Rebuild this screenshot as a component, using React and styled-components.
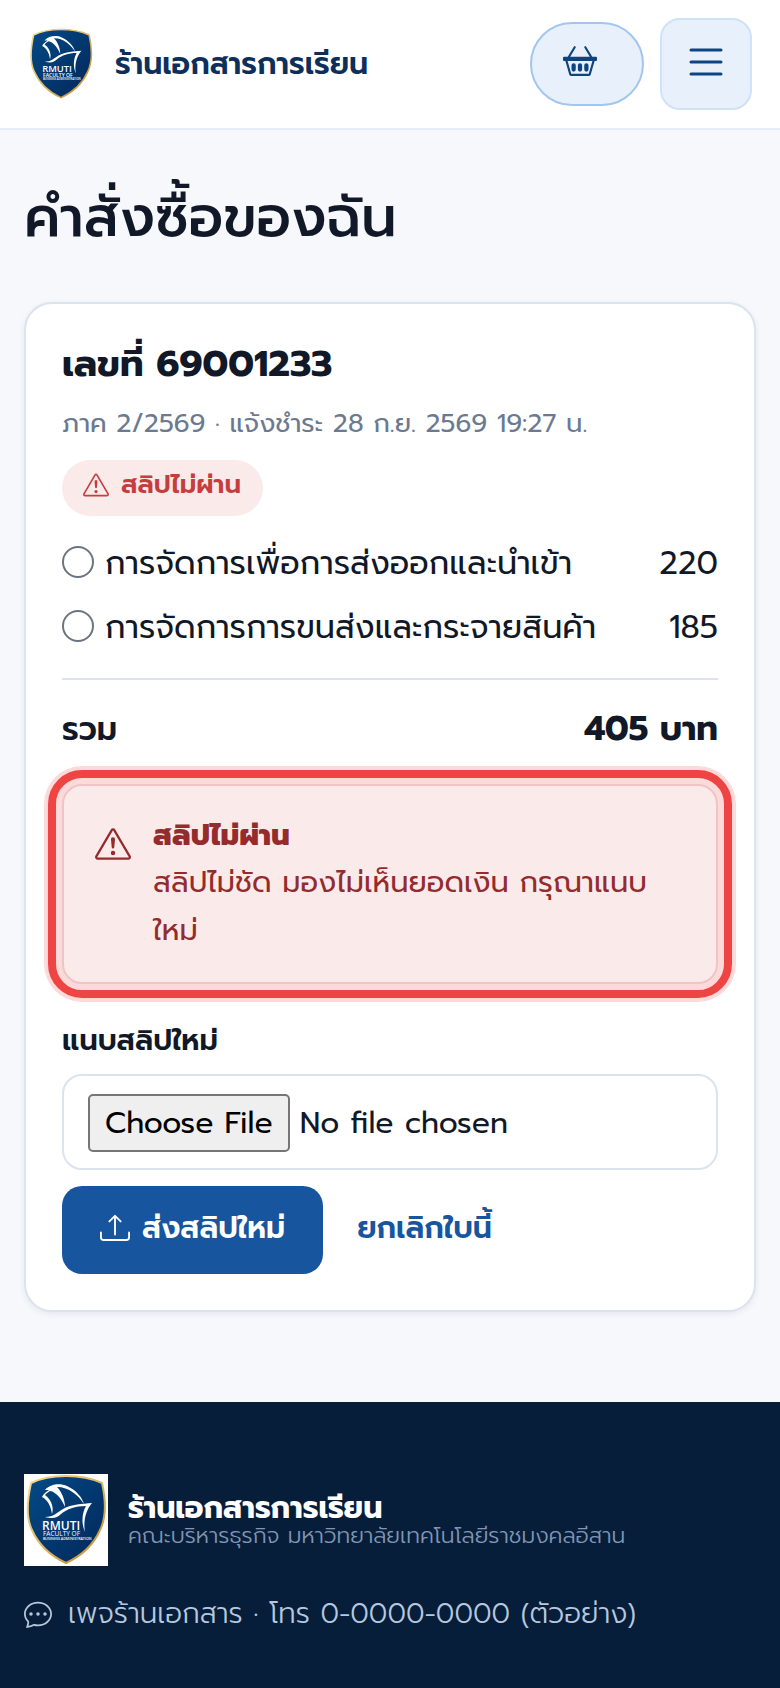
import React from "react";
import styled, { createGlobalStyle } from "styled-components";
import {
  BsBasket2,
  BsList,
  BsExclamationTriangle,
  BsCircle,
  BsUpload,
  BsChatDots,
} from "react-icons/bs";

const items = [
  { name: "การจัดการเพื่อการส่งออกและนำเข้า", price: 220 },
  { name: "การจัดการการขนส่งและกระจายสินค้า", price: 185 },
];

const Logo = ({ width, height }) => (
  <svg width={width} height={height} viewBox="0 0 84 92" role="img" aria-label="RMUTI">
    <defs>
      <linearGradient id="shield" x1="0" y1="0" x2="1" y2="1">
        <stop offset="0" stopColor="#034a86" />
        <stop offset="1" stopColor="#02275a" />
      </linearGradient>
      <linearGradient id="rim" x1="0" y1="0" x2="1" y2="1">
        <stop offset="0" stopColor="#f3dc8f" />
        <stop offset="0.5" stopColor="#dcb765" />
        <stop offset="1" stopColor="#c08a2c" />
      </linearGradient>
    </defs>
    <path fill="#fff" d="M0 0h84v92H0z" />
    <path
      d="M42 2C55 2 67 4 78 9C82 27 82 44 76 56C69 72 57 82 42 89C27 82 15 72 8 56C2 44 3 27 7 9C17 4 29 2 42 2Z"
      fill="url(#shield)"
      stroke="url(#rim)"
      strokeWidth="2"
    />
    <path
      d="M21 16C26 10 36 9 43 12C52 16 58 23 60 30C54 21 45 13 33 13C38 18 41 26 41 33C37 24 32 18 26 17C24 18 22 20 21 21C28 26 30 34 28 40C27 33 24 26 18 23C19 20 22 18 25 16Z"
      fill="#fff"
    />
    <path
      d="M21 43C30 43 32 39 39 35C48 30 58 30 68 29C62 36 59 47 61 58C57 49 58 39 62 32C51 32 43 35 37 40C33 44 29 45 21 43Z"
      fill="#fff"
    />
    <g fill="#fff" fontFamily="'Open Sans', sans-serif">
      <text x="18" y="56" fontSize="12" fontWeight="600">RMUTI</text>
      <text x="19" y="62" fontSize="6.5">FACULTY OF</text>
      <text x="19" y="66" fontSize="3.6" fontWeight="600">BUSINESS ADMINISTRATION</text>
    </g>
  </svg>
);

class App extends React.Component {
  render() {
    return (
      <Page>
        <GlobalStyle />
        <Header>
          <Brand href="#">
            <Logo width={66} height={72} />
            ร้านเอกสารการเรียน
          </Brand>
          <CartButton type="button" aria-label="ตะกร้า">
            <BsBasket2 size={34} />
          </CartButton>
          <MenuButton type="button" aria-label="เมนู">
            <BsList size={48} />
          </MenuButton>
        </Header>
        <Main>
          <Title>คำสั่งซื้อของฉัน</Title>
          <Card>
            <OrderHeading>เลขที่ 69001233</OrderHeading>
            <Meta>ภาค 2/2569 · แจ้งชำระ 28 ก.ย. 2569 19:27 น.</Meta>
            <Status>
              <BsExclamationTriangle size={26} />
              สลิปไม่ผ่าน
            </Status>
            <Items>
              {items.map(({ name, price }) => (
                <Item key={name}>
                  <BsCircle size={32} color="#6c757d" />
                  <span>{name}</span>
                  <Price>{price}</Price>
                </Item>
              ))}
            </Items>
            <Total>
              <span>รวม</span>
              <Amount>405 บาท</Amount>
            </Total>
            <Alert role="alert">
              <BsExclamationTriangle size={36} />
              <div>
                <strong>สลิปไม่ผ่าน</strong>
                <p>สลิปไม่ชัด มองไม่เห็นยอดเงิน กรุณาแนบใหม่</p>
              </div>
            </Alert>
            <Label htmlFor="slip">แนบสลิปใหม่</Label>
            <FileInput id="slip" type="file" />
            <Actions>
              <SubmitButton type="submit">
                <BsUpload size={30} />
                ส่งสลิปใหม่
              </SubmitButton>
              <CancelButton type="button">ยกเลิกใบนี้</CancelButton>
            </Actions>
          </Card>
        </Main>
        <Footer>
          <FooterBrand>
            <Logo width={84} height={92} />
            <div>
              <FooterName>ร้านเอกสารการเรียน</FooterName>
              <Faculty>คณะบริหารธุรกิจ มหาวิทยาลัยเทคโนโลยีราชมงคลอีสาน</Faculty>
            </div>
          </FooterBrand>
          <Contact>
            <BsChatDots size={28} />
            เพจร้านเอกสาร · โทร 0-0000-0000 (ตัวอย่าง)
          </Contact>
        </Footer>
      </Page>
    );
  }
}

const GlobalStyle = createGlobalStyle`
  * {
    box-sizing: border-box;
  }
  body {
    margin: 0;
    background: #f7f8fc;
    color: #111827;
    font-family: Prompt, Kanit, "Noto Sans Thai", "Noto Sans", sans-serif;
    font-size: 32px;
  }
  h1, h2, p, ul {
    margin: 0;
    padding: 0;
  }
  button, input {
    font-family: inherit;
  }
  svg {
    flex-shrink: 0;
  }
`;

const Page = styled.div`
  min-height: 100vh;
  display: flex;
  flex-direction: column;
`;

const Header = styled.header`
  display: flex;
  align-items: center;
  gap: 16px;
  padding: 18px 28px;
  background: #fff;
  border-bottom: 2px solid #e6edf5;
`;

const Brand = styled.a`
  display: flex;
  align-items: center;
  gap: 21px;
  margin-right: auto;
  color: #0d2f5c;
  font-size: 30px;
  font-weight: 600;
  line-height: 40px;
  white-space: nowrap;
  text-decoration: none;
`;

const CartButton = styled.button`
  width: 114px;
  height: 84px;
  padding: 0 31px 6px;
  display: flex;
  align-items: center;
  border: 2px solid #a3c6f0;
  border-radius: 42px;
  background: #e8f0fb;
  color: #0f4483;
`;

const MenuButton = styled.button`
  width: 92px;
  height: 92px;
  padding: 0 0 4px;
  display: flex;
  align-items: center;
  justify-content: center;
  border: 2px solid #cfe2f8;
  border-radius: 20px;
  background: #e8f0fb;
  color: #0f4483;
`;

const Main = styled.main`
  padding: 48px 24px 90px;
`;

const Title = styled.h1`
  margin-bottom: 44px;
  font-size: 56px;
  font-weight: 500;
  line-height: 80px;
`;

const Card = styled.section`
  padding: 32px 36px 36px;
  background: #fff;
  border: 2px solid #dbe3ec;
  border-radius: 28px;
  box-shadow: 0 2px 6px rgba(15, 40, 80, 0.08);
`;

const OrderHeading = styled.h2`
  font-size: 37px;
  font-weight: 700;
  line-height: 56px;
`;

const Meta = styled.p`
  margin-top: 10px;
  color: #6b7a90;
  font-size: 26px;
  line-height: 44px;
`;

const Status = styled.div`
  display: flex;
  align-items: center;
  gap: 12px;
  width: fit-content;
  height: 56px;
  margin-top: 14px;
  padding: 0 22px 6px 21px;
  border-radius: 28px;
  background: #faeaea;
  color: #c53d3d;
  font-size: 26px;
  font-weight: 600;
  line-height: 40px;
`;

const Items = styled.ul`
  margin-top: 14px;
  padding-bottom: 20px;
  list-style: none;
  border-bottom: 2px solid #dbe3ec;
`;

const Item = styled.li`
  display: flex;
  align-items: center;
  gap: 11px;
  height: 64px;
  line-height: 64px;

  span {
    padding-top: 3px;
  }
`;

const Price = styled.span`
  margin-left: auto;
`;

const Total = styled.div`
  display: flex;
  align-items: baseline;
  justify-content: space-between;
  margin-top: 21px;
  font-size: 32px;
  font-weight: 600;
  line-height: 56px;
`;

const Amount = styled.strong`
  font-size: 34px;
  font-weight: 700;
`;

const Alert = styled.div`
  display: flex;
  gap: 22px;
  margin-top: 26px;
  padding: 26px 31px;
  border: 2px solid #efc4c6;
  border-radius: 20px;
  background: #faeaea;
  color: #942c2e;
  outline: 8px solid #ef4444;
  outline-offset: 6px;
  box-shadow: 0 0 0 18px rgba(239, 68, 68, 0.2);
  font-size: 29px;
  line-height: 48px;

  svg {
    margin-top: 14px;
  }
  strong {
    display: block;
    font-weight: 800;
    line-height: 46px;
  }
  p {
    padding-bottom: 2px;
  }
`;

const Label = styled.label`
  display: block;
  margin-top: 32px;
  font-size: 29px;
  font-weight: 600;
  line-height: 48px;
`;

const FileInput = styled.input`
  display: block;
  width: 100%;
  height: 96px;
  margin-top: 10px;
  padding: 18px 24px;
  border: 2px solid #dbe3ec;
  border-radius: 20px;
  background: #fff;
  color: #111827;
  font-size: 30px;

  &::file-selector-button {
    height: 58px;
    margin-right: 10px;
    padding: 0 15px;
    border: 2px solid #767676;
    border-radius: 5px;
    background: #efefef;
    color: #000;
    font: inherit;
  }
`;

const Actions = styled.div`
  display: flex;
  align-items: center;
  gap: 4px;
  margin-top: 16px;
`;

const SubmitButton = styled.button`
  display: flex;
  align-items: center;
  gap: 12px;
  height: 88px;
  padding: 0 38px 5px;
  border: 0;
  border-radius: 20px;
  background: #17569e;
  color: #fff;
  font-size: 30px;
  font-weight: 600;
  white-space: nowrap;
`;

const CancelButton = styled.button`
  height: 88px;
  padding: 0 30px 5px;
  border: 0;
  background: none;
  color: #17569e;
  font-size: 30px;
  font-weight: 600;
`;

const Footer = styled.footer`
  flex: 1;
  padding: 72px 24px 40px;
  background: #071e3a;
`;

const FooterBrand = styled.div`
  display: flex;
  align-items: center;
  gap: 20px;
`;

const FooterName = styled.p`
  color: #fff;
  font-size: 30px;
  font-weight: 700;
  line-height: 32px;
`;

const Faculty = styled.p`
  color: #8196b4;
  font-size: 22px;
  font-weight: 300;
  line-height: 24px;
`;

const Contact = styled.p`
  display: flex;
  align-items: center;
  gap: 16px;
  margin-top: 24px;
  color: #b6c8de;
  font-size: 28px;
  font-weight: 300;
  line-height: 48px;
`;

export default App;
